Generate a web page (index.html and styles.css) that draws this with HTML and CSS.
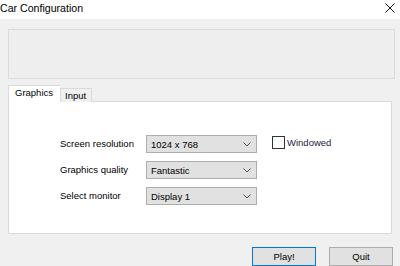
FILE: index.html
```html
<!DOCTYPE html>
<html lang="en">
<head>
  <meta charset="UTF-8" />
  <title>Car Configuration</title>
  <link rel="stylesheet" href="styles.css">
</head>
<body>
  <div class="titlebar">
    <span class="title">Car Configuration</span>
    <svg class="close" width="10" height="10" viewBox="0 0 10 10">
      <path d="M0.5 0.5 L9.5 9.5 M9.5 0.5 L0.5 9.5" stroke="#111" stroke-width="1" fill="none" />
    </svg>
  </div>

  <div class="window-body">
    <div class="banner"></div>

    <div class="tabs">
      <div class="tab active">Graphics</div>
      <div class="tab">Input</div>
    </div>

    <div class="panel">
      <div class="settings">
        <span class="label">Screen resolution</span>
        <div class="combo"><span>1024 x 768</span><svg width="8" height="5" viewBox="0 0 8 5"><path d="M0.5 0.5 L4 4 L7.5 0.5" stroke="#555" fill="none" /></svg></div>
        <label class="check"><span class="box"></span>Windowed</label>

        <span class="label">Graphics quality</span>
        <div class="combo"><span>Fantastic</span><svg width="8" height="5" viewBox="0 0 8 5"><path d="M0.5 0.5 L4 4 L7.5 0.5" stroke="#555" fill="none" /></svg></div>
        <span></span>

        <span class="label">Select monitor</span>
        <div class="combo"><span>Display 1</span><svg width="8" height="5" viewBox="0 0 8 5"><path d="M0.5 0.5 L4 4 L7.5 0.5" stroke="#555" fill="none" /></svg></div>
        <span></span>
      </div>
    </div>

    <div class="actions">
      <button class="btn default">Play!</button>
      <button class="btn">Quit</button>
    </div>
  </div>
</body>
</html>
```

FILE: styles.css
```css
body {
  margin: 0;
  width: 400px;
  height: 266px;
  overflow: hidden;
  background-color: #f0f0f0;
  font-family: "Liberation Sans", Arial, sans-serif;
  font-size: 9.5px;
  color: #000;
}
.titlebar {
  height: 19px;
  background-color: #fff;
  display: flex;
  align-items: center;
  justify-content: space-between;
  padding: 0 5px 0 0;
}
.title {
  font-size: 10.6px;
  margin-top: -3px;
}
.close {
  margin-top: -3px;
}
.window-body {
  padding: 10px 0 0 8px;
}
.banner {
  height: 48px;
  margin-right: 5px;
  border: 1px solid #dadada;
  background-color: #eeeeee;
}
.tabs {
  display: flex;
  align-items: flex-end;
  margin-top: 5px;
  height: 17px;
}
.tab {
  height: 13px;
  line-height: 14px;
  padding: 0 5px 0 4px;
  border: 1px solid #dadada;
  border-bottom: none;
  background-color: #f0f0f0;
  position: relative;
  top: 1px;
}
.tab.active {
  height: 16px;
  line-height: 14px;
  background-color: #fff;
  border-right: none;
  z-index: 1;
  padding: 0 7px 0 6px;
}
.panel {
  height: 133px;
  margin-right: 8px;
  border: 1px solid #dadada;
  background-color: #fff;
  padding: 33px 0 0 51px;
  box-sizing: border-box;
}
.settings {
  display: grid;
  grid-template-columns: 86px 111px auto;
  row-gap: 8px;
  align-items: center;
}
.label {
  margin-top: -2px;
}
.combo {
  height: 18px;
  box-sizing: border-box;
  border: 1px solid #adadad;
  background-color: #e1e1e1;
  display: flex;
  align-items: center;
  justify-content: space-between;
  padding: 0 5px 0 4px;
}
.check {
  display: flex;
  align-items: center;
  gap: 2px;
  color: #1c1c3a;
  align-self: start;
  margin: 1px 0 0 15px;
}
.box {
  width: 11px;
  height: 11px;
  border: 1px solid #333;
  background-color: #fff;
}
.actions {
  display: flex;
  justify-content: flex-end;
  gap: 13px;
  margin: 13px 7px 0 0;
}
.btn {
  width: 64px;
  height: 19px;
  padding: 0;
  font-family: inherit;
  font-size: 9.5px;
  background-color: #e1e1e1;
  border: 1px solid #adadad;
  color: #000;
}
.btn.default {
  border-color: #0078d7;
}
```
